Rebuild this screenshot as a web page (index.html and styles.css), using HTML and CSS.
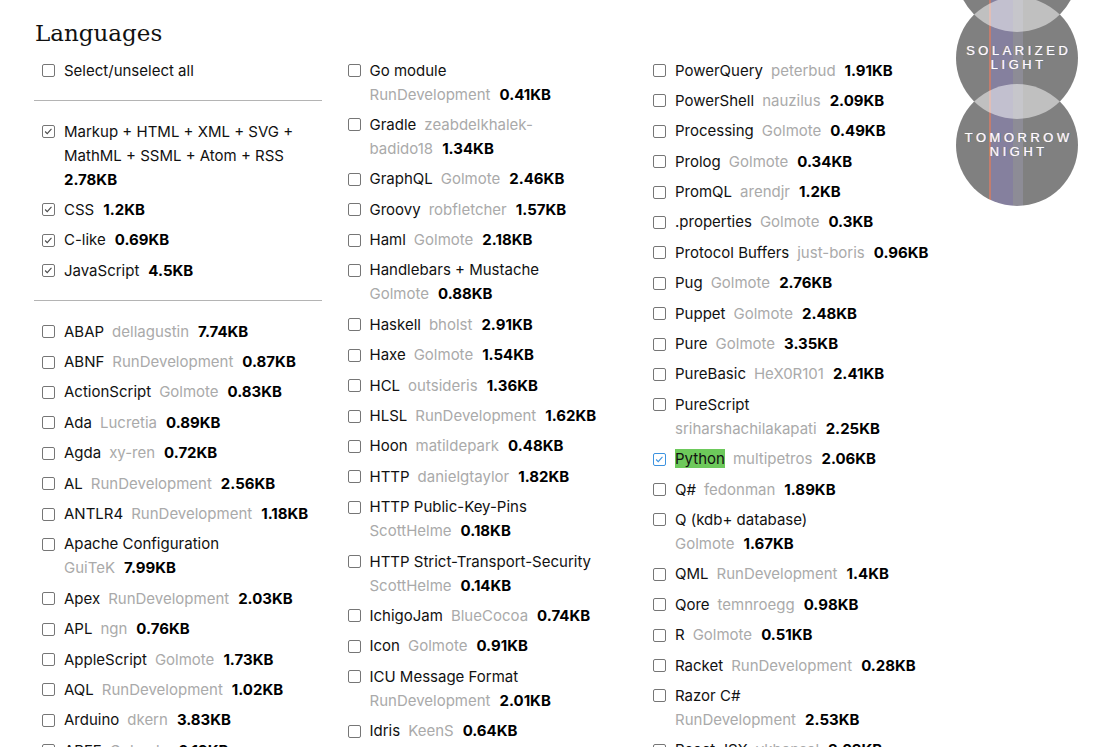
FILE: index.html
```html
<!DOCTYPE html>
<html lang="en">
<head>
<meta charset="utf-8">
<title>Languages</title>
<link rel="stylesheet" href="styles.css">
</head>
<body>
<section class="page">
  <h1 class="title">Languages</h1>
  <div class="cols">
    <ul class="col">
      <li class="item"><span class="box"></span><span class="txt">Select/unselect all</span></li>
      <li class="sep"></li>
      <li class="item"><span class="box on"><svg viewBox="0 0 13 13"><polyline points="2.5,6.5 5,9 10,3.5"/></svg></span><span class="txt">Markup + HTML + XML + SVG +<br>MathML + SSML + Atom + RSS<br><b class="size first">2.78KB</b></span></li>
      <li class="item"><span class="box on"><svg viewBox="0 0 13 13"><polyline points="2.5,6.5 5,9 10,3.5"/></svg></span><span class="txt">CSS<b class="size">1.2KB</b></span></li>
      <li class="item"><span class="box on"><svg viewBox="0 0 13 13"><polyline points="2.5,6.5 5,9 10,3.5"/></svg></span><span class="txt">C-like<b class="size">0.69KB</b></span></li>
      <li class="item"><span class="box on"><svg viewBox="0 0 13 13"><polyline points="2.5,6.5 5,9 10,3.5"/></svg></span><span class="txt">JavaScript<b class="size">4.5KB</b></span></li>
      <li class="sep"></li>
      <li class="item"><span class="box"></span><span class="txt">ABAP<span class="owner">dellagustin</span><b class="size">7.74KB</b></span></li>
      <li class="item"><span class="box"></span><span class="txt">ABNF<span class="owner">RunDevelopment</span><b class="size">0.87KB</b></span></li>
      <li class="item"><span class="box"></span><span class="txt">ActionScript<span class="owner">Golmote</span><b class="size">0.83KB</b></span></li>
      <li class="item"><span class="box"></span><span class="txt">Ada<span class="owner">Lucretia</span><b class="size">0.89KB</b></span></li>
      <li class="item"><span class="box"></span><span class="txt">Agda<span class="owner">xy-ren</span><b class="size">0.72KB</b></span></li>
      <li class="item"><span class="box"></span><span class="txt">AL<span class="owner">RunDevelopment</span><b class="size">2.56KB</b></span></li>
      <li class="item"><span class="box"></span><span class="txt">ANTLR4<span class="owner">RunDevelopment</span><b class="size">1.18KB</b></span></li>
      <li class="item"><span class="box"></span><span class="txt">Apache Configuration<br><span class="owner first">GuiTeK</span><b class="size">7.99KB</b></span></li>
      <li class="item"><span class="box"></span><span class="txt">Apex<span class="owner">RunDevelopment</span><b class="size">2.03KB</b></span></li>
      <li class="item"><span class="box"></span><span class="txt">APL<span class="owner">ngn</span><b class="size">0.76KB</b></span></li>
      <li class="item"><span class="box"></span><span class="txt">AppleScript<span class="owner">Golmote</span><b class="size">1.73KB</b></span></li>
      <li class="item"><span class="box"></span><span class="txt">AQL<span class="owner">RunDevelopment</span><b class="size">1.02KB</b></span></li>
      <li class="item"><span class="box"></span><span class="txt">Arduino<span class="owner">dkern</span><b class="size">3.83KB</b></span></li>
      <li class="item"><span class="box"></span><span class="txt">ARFF<span class="owner">Golmote</span><b class="size">0.19KB</b></span></li>
    </ul>
    <ul class="col">
      <li class="item"><span class="box"></span><span class="txt">Go module<br><span class="owner first">RunDevelopment</span><b class="size">0.41KB</b></span></li>
      <li class="item"><span class="box"></span><span class="txt">Gradle<span class="owner">zeabdelkhalek-<br>badido18</span><b class="size">1.34KB</b></span></li>
      <li class="item"><span class="box"></span><span class="txt">GraphQL<span class="owner">Golmote</span><b class="size">2.46KB</b></span></li>
      <li class="item"><span class="box"></span><span class="txt">Groovy<span class="owner">robfletcher</span><b class="size">1.57KB</b></span></li>
      <li class="item"><span class="box"></span><span class="txt">Haml<span class="owner">Golmote</span><b class="size">2.18KB</b></span></li>
      <li class="item"><span class="box"></span><span class="txt">Handlebars + Mustache<br><span class="owner first">Golmote</span><b class="size">0.88KB</b></span></li>
      <li class="item"><span class="box"></span><span class="txt">Haskell<span class="owner">bholst</span><b class="size">2.91KB</b></span></li>
      <li class="item"><span class="box"></span><span class="txt">Haxe<span class="owner">Golmote</span><b class="size">1.54KB</b></span></li>
      <li class="item"><span class="box"></span><span class="txt">HCL<span class="owner">outsideris</span><b class="size">1.36KB</b></span></li>
      <li class="item"><span class="box"></span><span class="txt">HLSL<span class="owner">RunDevelopment</span><b class="size">1.62KB</b></span></li>
      <li class="item"><span class="box"></span><span class="txt">Hoon<span class="owner">matildepark</span><b class="size">0.48KB</b></span></li>
      <li class="item"><span class="box"></span><span class="txt">HTTP<span class="owner">danielgtaylor</span><b class="size">1.82KB</b></span></li>
      <li class="item"><span class="box"></span><span class="txt">HTTP Public-Key-Pins<br><span class="owner first">ScottHelme</span><b class="size">0.18KB</b></span></li>
      <li class="item"><span class="box"></span><span class="txt">HTTP Strict-Transport-Security<br><span class="owner first">ScottHelme</span><b class="size">0.14KB</b></span></li>
      <li class="item"><span class="box"></span><span class="txt">IchigoJam<span class="owner">BlueCocoa</span><b class="size">0.74KB</b></span></li>
      <li class="item"><span class="box"></span><span class="txt">Icon<span class="owner">Golmote</span><b class="size">0.91KB</b></span></li>
      <li class="item"><span class="box"></span><span class="txt">ICU Message Format<br><span class="owner first">RunDevelopment</span><b class="size">2.01KB</b></span></li>
      <li class="item"><span class="box"></span><span class="txt">Idris<span class="owner">KeenS</span><b class="size">0.64KB</b></span></li>
    </ul>
    <ul class="col">
      <li class="item"><span class="box"></span><span class="txt">PowerQuery<span class="owner">peterbud</span><b class="size">1.91KB</b></span></li>
      <li class="item"><span class="box"></span><span class="txt">PowerShell<span class="owner">nauzilus</span><b class="size">2.09KB</b></span></li>
      <li class="item"><span class="box"></span><span class="txt">Processing<span class="owner">Golmote</span><b class="size">0.49KB</b></span></li>
      <li class="item"><span class="box"></span><span class="txt">Prolog<span class="owner">Golmote</span><b class="size">0.34KB</b></span></li>
      <li class="item"><span class="box"></span><span class="txt">PromQL<span class="owner">arendjr</span><b class="size">1.2KB</b></span></li>
      <li class="item"><span class="box"></span><span class="txt">.properties<span class="owner">Golmote</span><b class="size">0.3KB</b></span></li>
      <li class="item"><span class="box"></span><span class="txt">Protocol Buffers<span class="owner">just-boris</span><b class="size">0.96KB</b></span></li>
      <li class="item"><span class="box"></span><span class="txt">Pug<span class="owner">Golmote</span><b class="size">2.76KB</b></span></li>
      <li class="item"><span class="box"></span><span class="txt">Puppet<span class="owner">Golmote</span><b class="size">2.48KB</b></span></li>
      <li class="item"><span class="box"></span><span class="txt">Pure<span class="owner">Golmote</span><b class="size">3.35KB</b></span></li>
      <li class="item"><span class="box"></span><span class="txt">PureBasic<span class="owner">HeX0R101</span><b class="size">2.41KB</b></span></li>
      <li class="item"><span class="box"></span><span class="txt">PureScript<br><span class="owner first">sriharshachilakapati</span><b class="size">2.25KB</b></span></li>
      <li class="item"><span class="box on blue"><svg viewBox="0 0 13 13"><polyline points="2.5,6.5 5,9 10,3.5"/></svg></span><span class="txt"><span class="hl">Python</span><span class="owner">multipetros</span><b class="size">2.06KB</b></span></li>
      <li class="item"><span class="box"></span><span class="txt">Q#<span class="owner">fedonman</span><b class="size">1.89KB</b></span></li>
      <li class="item"><span class="box"></span><span class="txt">Q (kdb+ database)<br><span class="owner first">Golmote</span><b class="size">1.67KB</b></span></li>
      <li class="item"><span class="box"></span><span class="txt">QML<span class="owner">RunDevelopment</span><b class="size">1.4KB</b></span></li>
      <li class="item"><span class="box"></span><span class="txt">Qore<span class="owner">temnroegg</span><b class="size">0.98KB</b></span></li>
      <li class="item"><span class="box"></span><span class="txt">R<span class="owner">Golmote</span><b class="size">0.51KB</b></span></li>
      <li class="item"><span class="box"></span><span class="txt">Racket<span class="owner">RunDevelopment</span><b class="size">0.28KB</b></span></li>
      <li class="item"><span class="box"></span><span class="txt">Razor C#<br><span class="owner first">RunDevelopment</span><b class="size">2.53KB</b></span></li>
      <li class="item"><span class="box"></span><span class="txt">React JSX<span class="owner">vkbansal</span><b class="size">3.23KB</b></span></li>
    </ul>
  </div>
</section>
<div class="themes">
  <div class="theme"><span class="tname">Okaidia</span></div>
  <div class="theme"><span class="tname">Solarized<br>Light</span></div>
  <div class="theme"><span class="tname">Tomorrow<br>Night</span></div>
</div>
</body>
</html>
```
FILE: styles.css
```css
html, body {
  margin: 0;
  padding: 0;
}
body {
  height: 747px;
  overflow: hidden;
  position: relative;
  background: #fff;
  color: #111;
  font-family: Inter, "Noto Sans", sans-serif;
  font-size: 15px;
}
.page {
  padding-left: 34px;
}
.title {
  font-family: "DejaVu Serif", serif;
  font-weight: normal;
  font-size: 23px;
  line-height: 30px;
  margin: 18px 0 10.5px 1px;
  color: #111;
}
.cols {
  display: flex;
  gap: 17.5px;
  align-items: flex-start;
}
.col {
  width: 288px;
  list-style: none;
  margin: 0;
  padding: 0;
}
.item {
  display: flex;
  align-items: flex-start;
  line-height: 24px;
  margin-bottom: 6.4px;
  padding-left: 8px;
  white-space: nowrap;
}
.box {
  flex: none;
  box-sizing: border-box;
  width: 13px;
  height: 13px;
  margin: 5.5px 9px 0 0;
  border: 1px solid #767676;
  border-radius: 2px;
  background: #fff;
  display: flex;
}
.box svg {
  width: 11px;
  height: 11px;
  fill: none;
  stroke: #4a4a4a;
  stroke-width: 1.3;
}
.box.blue {
  border-color: #3d93e0;
}
.box.blue svg {
  stroke: #3d93e0;
}
.sep {
  height: 1px;
  background: #b4b4b4;
  margin: 17px 0 19px;
}
.owner {
  color: #aaa;
  margin-left: 8px;
}
.size {
  font-weight: 700;
  color: #000;
  margin-left: 9px;
}
.first {
  margin-left: 0;
}
.hl {
  background: #6dc95b;
}
.themes {
  position: absolute;
  left: 956px;
  top: -90px;
  display: flex;
  flex-direction: column;
}
.theme {
  position: relative;
  width: 122px;
  height: 122px;
  margin-bottom: -35px;
  border-radius: 50%;
  overflow: hidden;
  display: flex;
  align-items: center;
  justify-content: center;
  background: linear-gradient(to right, #808080 0, #808080 33px, #c27d6e 33px, #c27d6e 35px, #85809e 35px, #85809e 57px, #8d8c96 57px, #8d8c96 67px, #808080 67px);
}
.theme + .theme::before {
  content: "";
  position: absolute;
  left: 0;
  top: -87px;
  width: 122px;
  height: 122px;
  border-radius: 50%;
  background: rgba(255, 255, 255, 0.5);
}
.tname {
  position: relative;
  color: #fff;
  text-transform: uppercase;
  text-align: center;
  font-family: "Liberation Sans", Arial, sans-serif;
  font-size: 13px;
  line-height: 14px;
  letter-spacing: 3.5px;
  padding-left: 3.5px;
  text-shadow: -1px 0 rgba(255, 170, 60, 0.6), 1px 0 rgba(60, 140, 255, 0.6);
}
```
